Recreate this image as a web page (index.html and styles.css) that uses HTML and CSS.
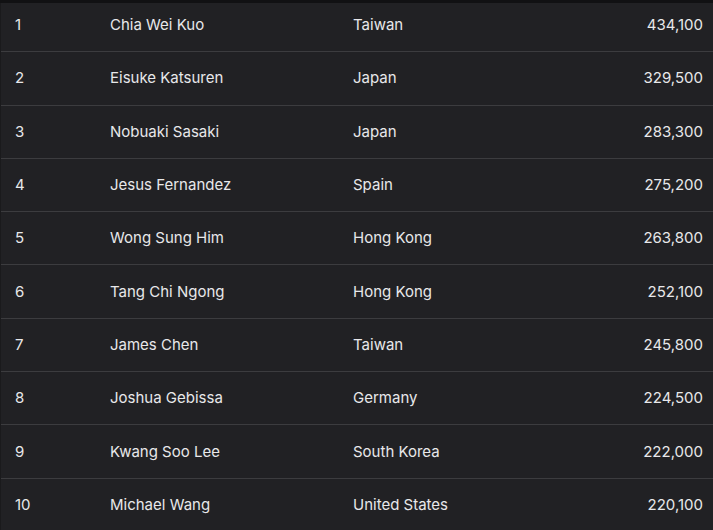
FILE: index.html
```html
<!DOCTYPE html>
<html lang="en">
<head>
<meta charset="utf-8">
<link rel="stylesheet" href="styles.css">
</head>
<body>
<div class="topband"></div>
<div class="table">
  <div class="row"><span class="c rank">1</span><span class="c">Chia Wei Kuo</span><span class="c">Taiwan</span><span class="c pts">434,100</span></div>
  <div class="row"><span class="c rank">2</span><span class="c">Eisuke Katsuren</span><span class="c">Japan</span><span class="c pts">329,500</span></div>
  <div class="row"><span class="c rank">3</span><span class="c">Nobuaki Sasaki</span><span class="c">Japan</span><span class="c pts">283,300</span></div>
  <div class="row"><span class="c rank">4</span><span class="c">Jesus Fernandez</span><span class="c">Spain</span><span class="c pts">275,200</span></div>
  <div class="row"><span class="c rank">5</span><span class="c">Wong Sung Him</span><span class="c">Hong Kong</span><span class="c pts">263,800</span></div>
  <div class="row"><span class="c rank">6</span><span class="c">Tang Chi Ngong</span><span class="c">Hong Kong</span><span class="c pts">252,100</span></div>
  <div class="row"><span class="c rank">7</span><span class="c">James Chen</span><span class="c">Taiwan</span><span class="c pts">245,800</span></div>
  <div class="row"><span class="c rank">8</span><span class="c">Joshua Gebissa</span><span class="c">Germany</span><span class="c pts">224,500</span></div>
  <div class="row"><span class="c rank">9</span><span class="c">Kwang Soo Lee</span><span class="c">South Korea</span><span class="c pts">222,000</span></div>
  <div class="row"><span class="c rank">10</span><span class="c">Michael Wang</span><span class="c">United States</span><span class="c pts">220,100</span></div>
</div>
</body>
</html>
```
FILE: styles.css
```css
html, body {
  margin: 0;
  padding: 0;
  background: #212124;
  overflow: hidden;
}
body {
  font-family: Inter, "Noto Sans", sans-serif;
  font-size: 15px;
  color: #e8e8ea;
  position: relative;
}
.topband {
  position: absolute;
  top: 0;
  left: 0;
  right: 0;
  height: 3px;
  background: #111113;
}
.table {
  margin-top: -1px;
  border-left: 1px solid #1a1a1c;
}
.row {
  display: grid;
  grid-template-columns: 95px 243px 1fr auto;
  align-items: center;
  height: 52.3px;
  border-bottom: 1px solid #3c3c3f;
}
.c {
  padding-left: 14px;
  line-height: 20px;
}
.pts {
  padding-right: 10px;
  text-align: right;
}
```
